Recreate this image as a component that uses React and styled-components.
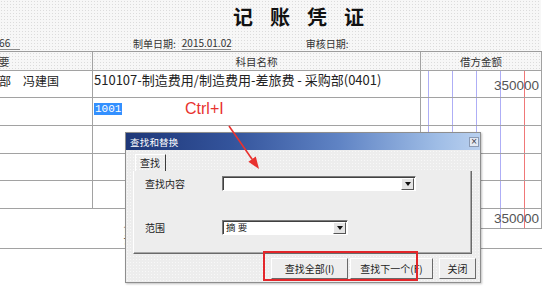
import styled, { createGlobalStyle } from "styled-components";

const GlobalStyle = createGlobalStyle`
  html, body {
    margin: 0;
    padding: 0;
    background: #fff;
  }
  body {
    font-family: "Noto Sans CJK SC", "Noto Sans", sans-serif;
  }
`;

const dotted = `
  background-color: #f7f7f7;
  background-image: radial-gradient(#dcdcdc 0.7px, transparent 0.9px);
  background-size: 3px 3px;
`;

const moneyLines = `
  background-color: #fff;
  background-image:
    linear-gradient(90deg, transparent 103px, #f07878 103px, #f07878 104px, transparent 104px),
    repeating-linear-gradient(90deg, transparent 0 7px, #aeaef6 7px 8px, transparent 8px 24px);
`;

const rows = [
  { summary: "报销采购部　冯建国", subject: "510107-制造费用/制造费用-差旅费 - 采购部(0401)", money: "350000" },
  { summary: "", subject: "", money: "", editing: "1001" },
  { summary: "", subject: "", money: "" },
  { summary: "", subject: "", money: "" },
  { summary: "", subject: "", money: "" },
];

const App = () => {
  return (
    <Page>
      <GlobalStyle />
      <Top>
        <Title>记账凭证</Title>
        <Info>
          <Field $ml={-12} $w={32}>0066</Field>
          <Label $ml={113}>制单日期:</Label>
          <Field $ml={6} $w={49}>2015.01.02</Field>
          <Label $ml={75}>审核日期:</Label>
        </Info>
      </Top>

      <Table>
        <HeadCell>摘要</HeadCell>
        <HeadCell>科目名称</HeadCell>
        <HeadCell>借方金额</HeadCell>
        {rows.map((r, i) => [
          <SummaryCell key={`s${i}`}>{r.summary}</SummaryCell>,
          <SubjectCell key={`k${i}`}>
            {r.editing ? <Selected>{r.editing}</Selected> : r.subject}
          </SubjectCell>,
          <MoneyCell key={`m${i}`}>{r.money}</MoneyCell>,
        ])}
        <TotalLabel>
          <VerticalText>合计</VerticalText>
        </TotalLabel>
        <TotalMoney>
          <TotalBox>350000</TotalBox>
        </TotalMoney>
      </Table>

      <Dialog>
        <TitleBar>
          <TitleText>查找和替换</TitleText>
          <CloseBox>×</CloseBox>
        </TitleBar>
        <DialogBody>
          <TabStrip>
            <Tab>查找</Tab>
          </TabStrip>
          <Panel>
            <FormRow>
              <FormLabel>查找内容</FormLabel>
              <Combo $w={194}>
                <ComboText />
                <DropButton>
                  <DropArrow />
                </DropButton>
              </Combo>
            </FormRow>
            <FormRow $mt={29}>
              <FormLabel>范围</FormLabel>
              <Combo $w={126}>
                <ComboText>摘 要</ComboText>
                <DropButton>
                  <DropArrow />
                </DropButton>
              </Combo>
            </FormRow>
          </Panel>
          <Footer>
            <Button $w={77}>查找全部(I)</Button>
            <Button $w={83} $ml={2}>查找下一个(F)</Button>
            <Button $w={37} $ml={6}>关闭</Button>
          </Footer>
        </DialogBody>
      </Dialog>

      <Hint>Ctrl+I</Hint>
      <Arrow width="40" height="50" viewBox="0 0 40 50">
        <line x1="5" y1="4" x2="28.1" y2="37.2" stroke="#e8322f" strokeWidth="1.6" />
        <polygon points="35,47 24.4,39.8 31.8,34.6" fill="#e8322f" />
      </Arrow>
      <RedBox />
    </Page>
  );
};

export default App;

const Page = styled.div`
  position: relative;
  width: 544px;
  height: 288px;
  overflow: hidden;
  background: #fff;
`;

const Top = styled.div`
  width: 541px;
  ${dotted}
`;

const Title = styled.div`
  box-sizing: border-box;
  height: 36px;
  padding: 5px 0 0 233px;
  font-size: 20px;
  font-weight: 700;
  line-height: 24px;
  letter-spacing: 17px;
  color: #111;
  white-space: nowrap;
`;

const Info = styled.div`
  box-sizing: border-box;
  display: flex;
  align-items: flex-end;
  height: 15px;
  padding-bottom: 1px;
  font-size: 10px;
  line-height: 12px;
  color: #333;
`;

const Label = styled.span`
  margin-left: ${(p) => p.$ml}px;
  white-space: nowrap;
`;

const Field = styled.span`
  flex: none;
  width: ${(p) => p.$w}px;
  margin-left: ${(p) => p.$ml}px;
  border-bottom: 1px solid #8a8a8a;
  white-space: nowrap;
`;

const Table = styled.div`
  display: grid;
  grid-template-columns: 187px 328px 121px;
  grid-template-rows: 19px 27px 28px 28px 27px 28px 40px;
  width: 636px;
  margin-left: -94px;
  border-top: 1px solid #9c9c9c;
`;

const Cell = styled.div`
  box-sizing: border-box;
  border-right: 1px solid #a2a2a2;
  border-bottom: 1px solid #a2a2a2;
  background: #fff;
  overflow: hidden;
  white-space: nowrap;
`;

const HeadCell = styled(Cell)`
  ${dotted}
  display: flex;
  align-items: center;
  justify-content: center;
  font-size: 10.5px;
  color: #333;
`;

const SummaryCell = styled(Cell)`
  padding: 2px 0 0 45px;
  font-size: 12px;
  line-height: 15px;
  color: #222;
`;

const SubjectCell = styled(Cell)`
  padding: 1px 0 0 1px;
  font-size: 13px;
  line-height: 16px;
  color: #222;
`;

const Selected = styled.span`
  display: inline-block;
  padding: 0 1px;
  background: #3390ff;
  color: #fff;
  font-family: "Liberation Mono", monospace;
  font-size: 11px;
  line-height: 12px;
`;

const MoneyCell = styled(Cell)`
  ${moneyLines}
  display: flex;
  align-items: center;
  justify-content: flex-end;
  padding: 2px 2px 0 0;
  font-family: "Liberation Sans", sans-serif;
  font-size: 13.5px;
  color: #555;
`;

const TotalLabel = styled(Cell)`
  grid-column: span 2;
  padding: 14px 0 0 217px;
`;

const VerticalText = styled.div`
  writing-mode: vertical-lr;
  font-size: 10px;
  line-height: 10px;
  letter-spacing: 2px;
  color: #333;
`;

const TotalMoney = styled.div`
  box-sizing: border-box;
  border-bottom: 1px solid #a2a2a2;
  background: #fff;
`;

const TotalBox = styled.div`
  ${moneyLines}
  box-sizing: border-box;
  display: flex;
  align-items: center;
  justify-content: flex-end;
  height: 20px;
  padding-right: 2px;
  border-right: 1px solid #a2a2a2;
  border-bottom: 1px solid #a2a2a2;
  font-family: "Liberation Sans", sans-serif;
  font-size: 13.5px;
  color: #555;
`;

const Hint = styled.div`
  position: absolute;
  left: 185px;
  top: 100px;
  font-family: "Liberation Sans", sans-serif;
  font-size: 16px;
  line-height: 18px;
  color: #e8322f;
`;

const Arrow = styled.svg`
  position: absolute;
  left: 224px;
  top: 122px;
`;

const Dialog = styled.div`
  position: absolute;
  left: 125px;
  top: 132px;
  box-sizing: border-box;
  display: flex;
  flex-direction: column;
  width: 356px;
  height: 151px;
  border: 1px solid #8e8e8e;
  box-shadow: 1px 1px 2px rgba(0, 0, 0, 0.25);
  background: #ececec;
`;

const TitleBar = styled.div`
  display: flex;
  align-items: center;
  justify-content: space-between;
  height: 17px;
  padding: 0 1px 0 4px;
  background: linear-gradient(90deg, #1e3778 0%, #34549c 30%, #5f83c4 60%, #9fbde6 88%, #b9d0ef 100%);
`;

const TitleText = styled.span`
  font-size: 9.5px;
  color: #fff;
  letter-spacing: 0.2px;
`;

const CloseBox = styled.span`
  box-sizing: border-box;
  display: flex;
  align-items: center;
  justify-content: center;
  width: 10px;
  height: 10px;
  border: 1px solid #8a9ab4;
  background: #e3e9f2;
  font-family: "DejaVu Sans", sans-serif;
  font-size: 8px;
  line-height: 8px;
  color: #334;
`;

const DialogBody = styled.div`
  flex: 1;
  display: flex;
  flex-direction: column;
  background-color: #ededed;
  background-image: radial-gradient(#f8f8f8 0.7px, transparent 0.9px);
  background-size: 3px 3px;
`;

const TabStrip = styled.div`
  display: flex;
  align-items: flex-end;
  height: 21px;
  padding-left: 9px;
`;

const Tab = styled.div`
  box-sizing: border-box;
  height: 17px;
  padding: 0 5px 0 4px;
  border-top: 1px solid #fff;
  border-left: 1px solid #fff;
  border-right: 1px solid #3c3c3c;
  font-size: 10px;
  line-height: 15px;
  color: #222;
`;

const Panel = styled.div`
  box-sizing: border-box;
  height: 83px;
  margin: 0 8px 0 7px;
  padding: 5px 0 0 11px;
  border-left: 1px solid #fff;
  border-right: 1px solid #6a6a6a;
  border-bottom: 1px solid #6a6a6a;
  box-shadow: inset -1px -1px 0 #a8a8a8;
  background-color: #ededed;
`;

const FormRow = styled.div`
  display: flex;
  align-items: center;
  height: 15px;
  margin-top: ${(p) => p.$mt || 0}px;
`;

const FormLabel = styled.span`
  width: 77px;
  font-size: 10px;
  color: #222;
`;

const Combo = styled.div`
  box-sizing: border-box;
  display: flex;
  align-items: center;
  width: ${(p) => p.$w}px;
  height: 15px;
  border-top: 1px solid #7a7a7a;
  border-left: 1px solid #7a7a7a;
  border-right: 1px solid #fff;
  border-bottom: 1px solid #fff;
  box-shadow: inset 1px 1px 0 #404040;
  background: #fff;
`;

const ComboText = styled.span`
  flex: 1;
  padding-left: 3px;
  font-size: 9.5px;
  line-height: 13px;
  color: #222;
`;

const DropButton = styled.span`
  box-sizing: border-box;
  display: flex;
  align-items: center;
  justify-content: center;
  width: 13px;
  height: 12px;
  margin-right: 1px;
  border-top: 1px solid #fff;
  border-left: 1px solid #fff;
  border-right: 1px solid #555;
  border-bottom: 1px solid #555;
  background: #e4e4e4;
`;

const DropArrow = styled.span`
  width: 0;
  height: 0;
  border-left: 3px solid transparent;
  border-right: 3px solid transparent;
  border-top: 4px solid #111;
`;

const Footer = styled.div`
  display: flex;
  justify-content: flex-end;
  padding: 4px 4px 0 0;
`;

const Button = styled.div`
  box-sizing: border-box;
  display: flex;
  align-items: center;
  justify-content: center;
  width: ${(p) => p.$w}px;
  height: 21px;
  margin-left: ${(p) => p.$ml || 0}px;
  border-top: 1px solid #fff;
  border-left: 1px solid #fff;
  border-right: 1px solid #6a6a6a;
  border-bottom: 1px solid #6a6a6a;
  background: #eeeeee;
  font-size: 10px;
  color: #222;
  white-space: nowrap;
`;

const RedBox = styled.div`
  position: absolute;
  left: 263px;
  top: 251px;
  box-sizing: border-box;
  width: 155px;
  height: 30px;
  border: 2px solid #e3262a;
`;
